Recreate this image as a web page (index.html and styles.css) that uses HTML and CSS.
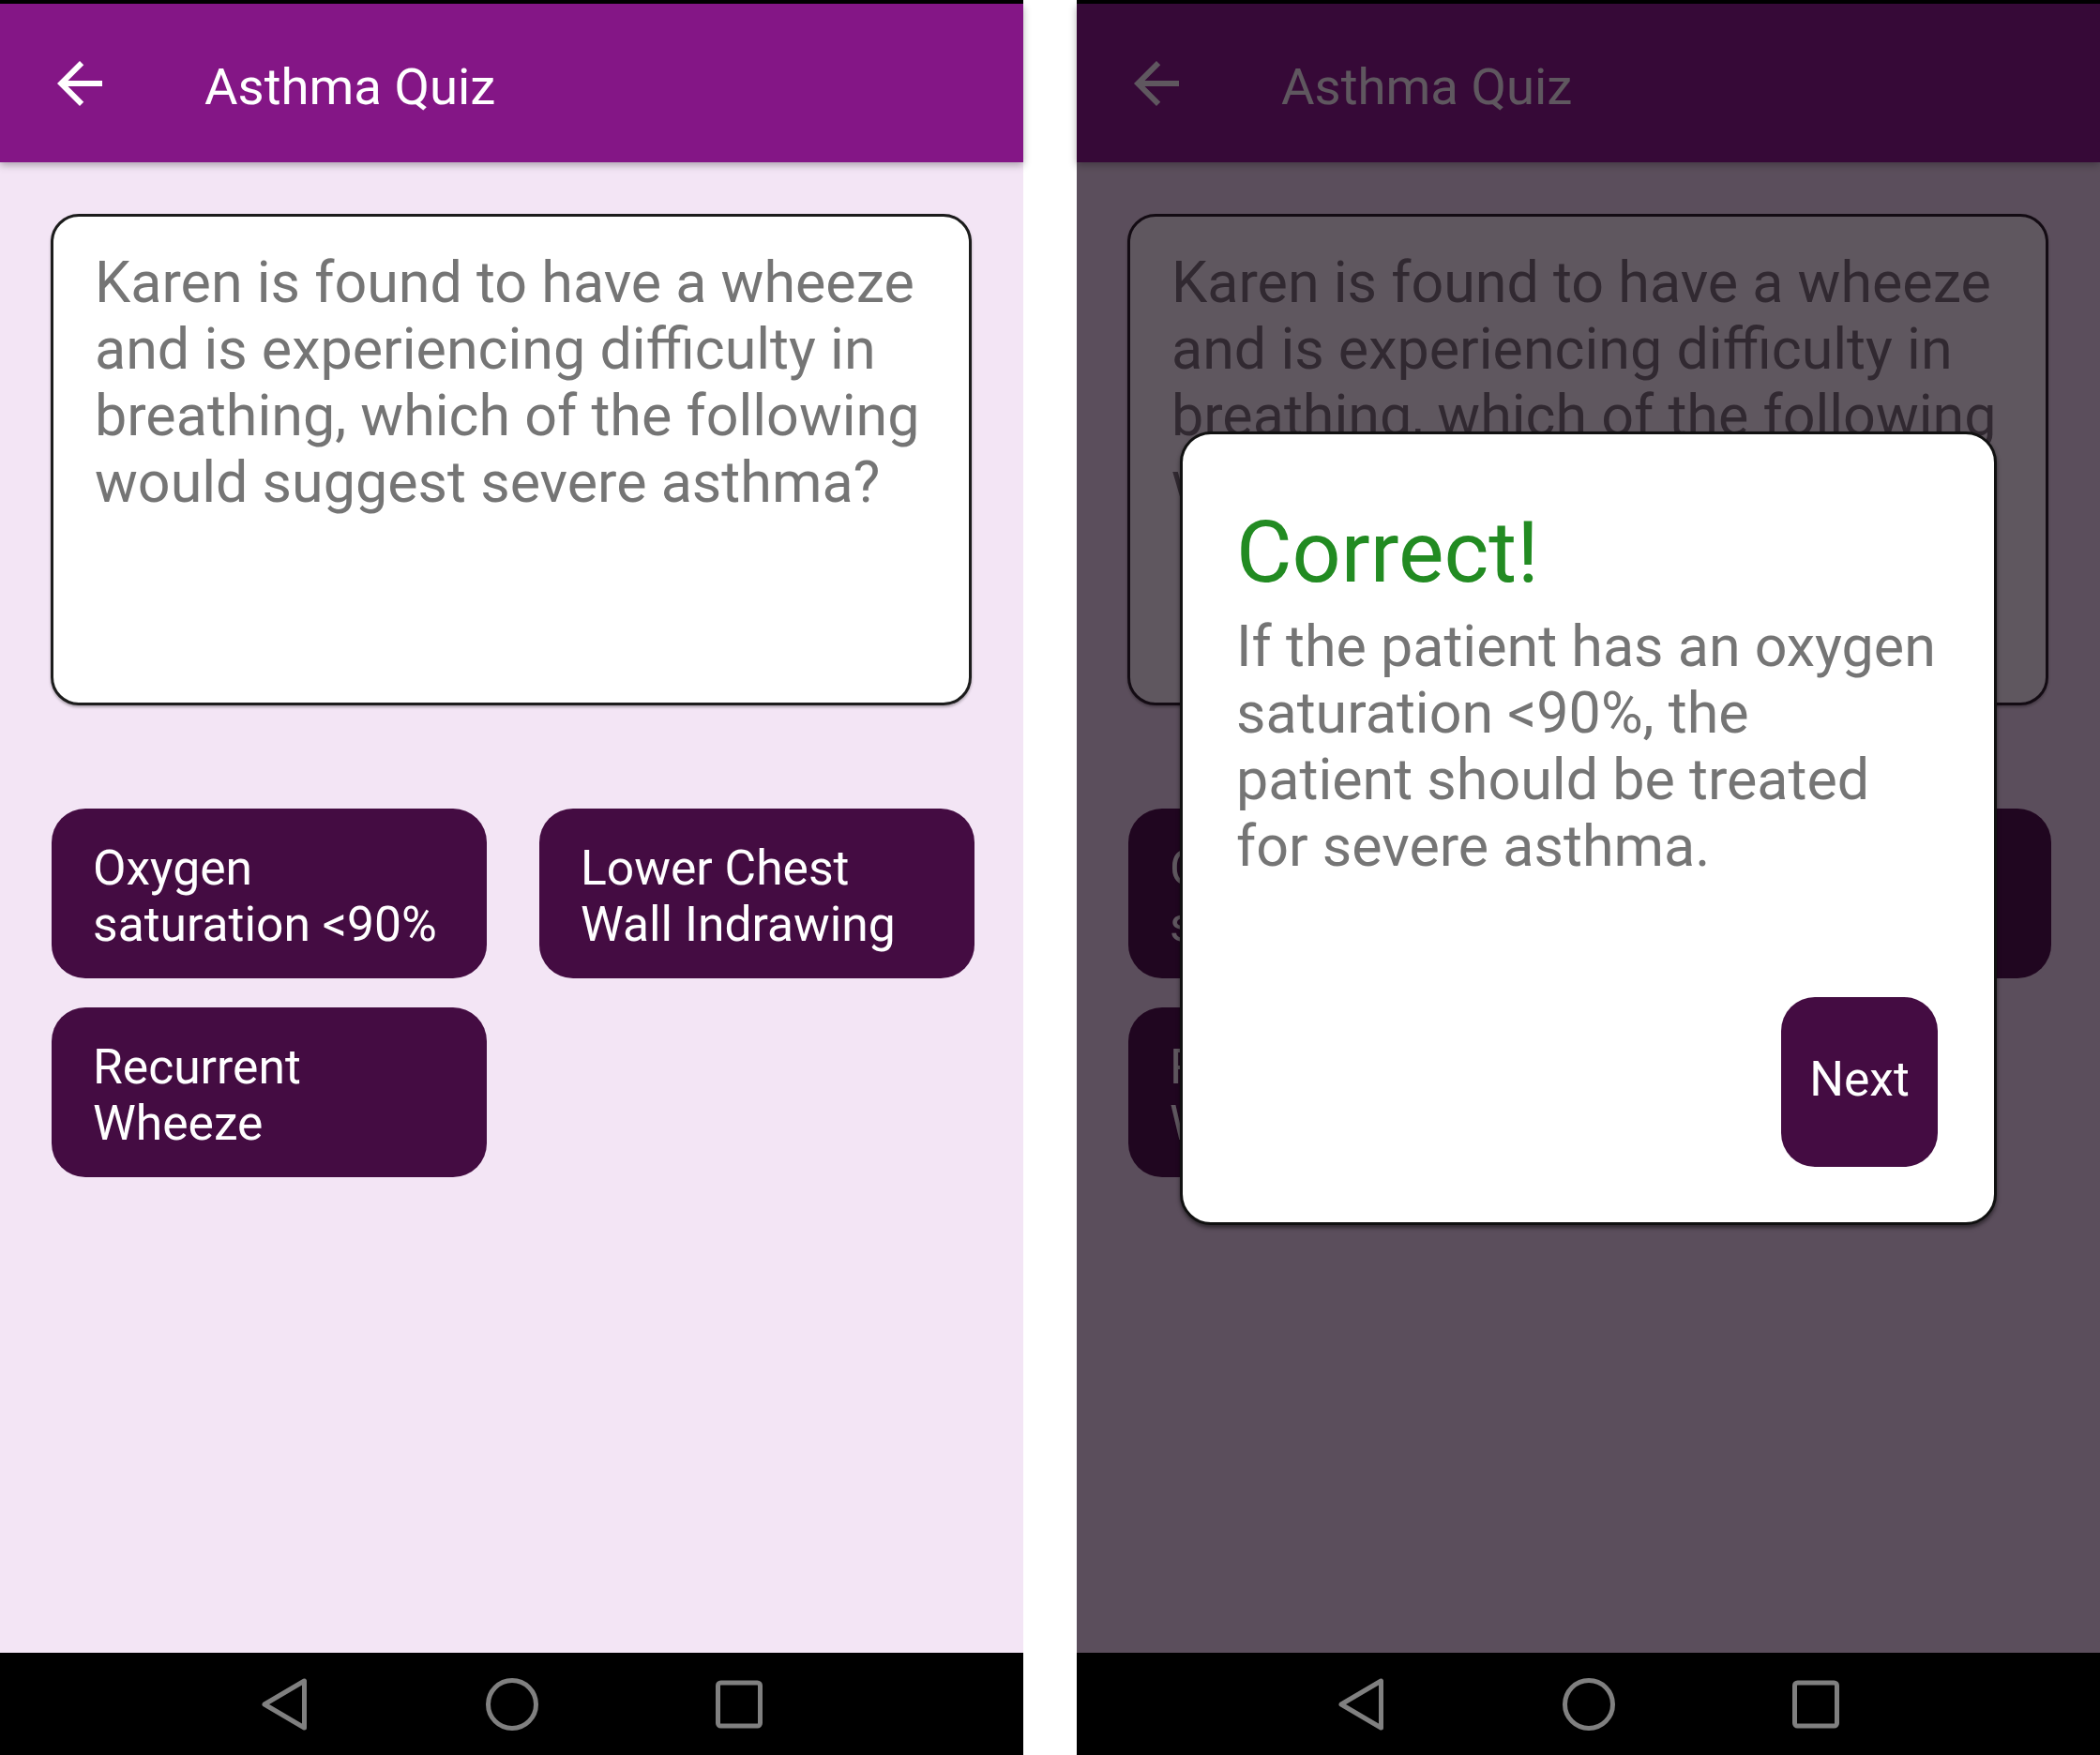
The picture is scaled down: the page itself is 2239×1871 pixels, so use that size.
FILE: index.html
```html
<!DOCTYPE html>
<html lang="en">
<head>
<meta charset="utf-8">
<title>Asthma Quiz</title>
<link rel="stylesheet" href="styles.css">
</head>
<body>
<div class="screens">
  <section class="phone">
    <div class="status"></div>
    <div class="screen">
      <header class="appbar">
        <svg class="back" viewBox="0 0 24 24"><path d="M20 11H7.83l5.59-5.59L12 4l-8 8 8 8 1.41-1.41L7.83 13H20v-2z"/></svg>
        <h1 class="title">Asthma Quiz</h1>
      </header>
      <main class="content">
        <div class="question">Karen is found to have a wheeze<br>and is experiencing difficulty in<br>breathing, which of the following<br>would suggest severe asthma?</div>
        <div class="answers">
          <button class="answer"><span>Oxygen saturation &lt;90%</span></button>
          <button class="answer"><span>Lower Chest Wall Indrawing</span></button>
          <button class="answer"><span>Recurrent Wheeze</span></button>
        </div>
      </main>
    </div>
    <nav class="navbar">
      <svg class="nav-icon" viewBox="0 0 60 60"><path d="M9 30 L51.5 5 L51.5 55 Z"/></svg>
      <svg class="nav-icon" viewBox="0 0 60 60"><circle cx="30" cy="30" r="25.5"/></svg>
      <svg class="nav-icon" viewBox="0 0 60 60"><rect x="7.5" y="7" width="45" height="46" rx="3"/></svg>
    </nav>
  </section>

  <section class="phone">
    <div class="status"></div>
    <div class="screen">
      <header class="appbar">
        <svg class="back" viewBox="0 0 24 24"><path d="M20 11H7.83l5.59-5.59L12 4l-8 8 8 8 1.41-1.41L7.83 13H20v-2z"/></svg>
        <h1 class="title">Asthma Quiz</h1>
      </header>
      <main class="content">
        <div class="question">Karen is found to have a wheeze<br>and is experiencing difficulty in<br>breathing, which of the following<br>would suggest severe asthma?</div>
        <div class="answers">
          <button class="answer"><span>Oxygen saturation &lt;90%</span></button>
          <button class="answer"><span>Lower Chest Wall Indrawing</span></button>
          <button class="answer"><span>Recurrent Wheeze</span></button>
        </div>
      </main>
      <div class="scrim"></div>
      <div class="dialog">
        <h2 class="dialog-title">Correct!</h2>
        <p class="dialog-text">If the patient has an oxygen<br>saturation &lt;90%, the<br>patient should be treated<br>for severe asthma.</p>
        <button class="next">Next</button>
      </div>
    </div>
    <nav class="navbar">
      <svg class="nav-icon" viewBox="0 0 60 60"><path d="M9 30 L51.5 5 L51.5 55 Z"/></svg>
      <svg class="nav-icon" viewBox="0 0 60 60"><circle cx="30" cy="30" r="25.5"/></svg>
      <svg class="nav-icon" viewBox="0 0 60 60"><rect x="7.5" y="7" width="45" height="46" rx="3"/></svg>
    </nav>
  </section>
</div>
</body>
</html>
```
FILE: styles.css
```css
* { box-sizing: border-box; }

body {
  margin: 0;
  background: #ffffff;
  font-family: Roboto, "Noto Sans", "Liberation Sans", sans-serif;
}

.screens {
  display: flex;
  gap: 57px;
  width: 2239px;
  height: 1871px;
}

.phone {
  width: 1091px;
  height: 1871px;
  display: flex;
  flex-direction: column;
  background: #000;
  position: relative;
}

.status {
  height: 4px;
  background: #000;
}

.screen {
  flex: 1;
  display: flex;
  flex-direction: column;
  position: relative;
  background: #f3e5f5;
}

.appbar {
  height: 169px;
  flex: none;
  background: #841686;
  display: flex;
  align-items: center;
  padding-left: 49px;
  box-shadow: 0 3px 8px rgba(0, 0, 0, 0.3);
  position: relative;
  z-index: 1;
}

.back {
  width: 72px;
  height: 72px;
  fill: #ffffff;
  flex: none;
}

.title {
  margin: 6px 0 0 97px;
  font-size: 54.5px;
  font-weight: 400;
  line-height: normal;
  color: #ffffff;
}

.content {
  flex: 1;
  padding: 55px 0 0 54px;
}

.question {
  width: 982px;
  height: 524px;
  background: #ffffff;
  border: 3px solid #1c1c1c;
  border-radius: 30px;
  padding: 35px 16px 0 44px;
  font-size: 61px;
  line-height: 71px;
  color: #757575;
  box-shadow: 0 2px 3px rgba(0, 0, 0, 0.3);
}

.answers {
  display: grid;
  grid-template-columns: 464px 464px;
  column-gap: 56px;
  row-gap: 31px;
  margin: 110px 0 0 1px;
}

.answer {
  height: 181px;
  background: #440c42;
  color: #ffffff;
  border: 0;
  border-radius: 36px;
  font-family: Roboto, "Noto Sans", sans-serif;
  font-size: 51.6px;
  font-weight: 400;
  line-height: 60px;
  text-align: left;
  padding: 7px 28px 0 44px;
  display: flex;
  align-items: center;
}

.scrim {
  position: absolute;
  inset: 0;
  background: rgba(15, 3, 15, 0.665);
  z-index: 2;
}

.dialog {
  position: absolute;
  left: 110px;
  top: 456px;
  width: 871px;
  height: 846px;
  background: #ffffff;
  border: 3px solid #111111;
  border-radius: 33px;
  padding: 72px 60px 59px 57px;
  display: flex;
  flex-direction: column;
  box-shadow: 0 3px 4px rgba(0, 0, 0, 0.5);
  z-index: 3;
}

.dialog-title {
  margin: 0;
  font-size: 91.5px;
  font-weight: 400;
  line-height: normal;
  color: #228b22;
}

.dialog-text {
  margin: 12px 0 0;
  font-size: 61px;
  line-height: 71px;
  color: #757575;
}

.next {
  margin-top: auto;
  align-self: flex-end;
  width: 167px;
  height: 181px;
  background: #440c42;
  color: #ffffff;
  border: 0;
  border-radius: 36px;
  font-family: Roboto, "Noto Sans", sans-serif;
  font-size: 51.6px;
  font-weight: 400;
  line-height: 60px;
  padding: 0 0 5px;
}

.navbar {
  height: 109px;
  flex: none;
  background: #000;
  display: flex;
  justify-content: center;
  align-items: center;
  gap: 182.5px;
}

.nav-icon {
  width: 60px;
  height: 60px;
  fill: none;
  stroke: #808080;
  stroke-width: 5;
  stroke-linejoin: round;
}
```
